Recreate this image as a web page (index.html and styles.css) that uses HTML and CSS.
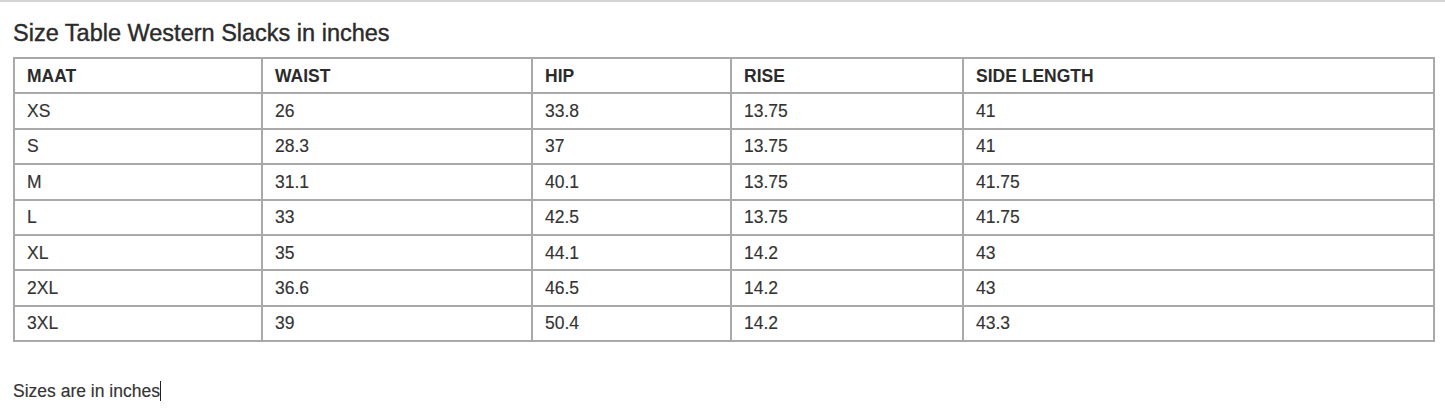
FILE: index.html
```html
<!DOCTYPE html>
<html>
<head>
<meta charset="utf-8">
<link rel="stylesheet" href="styles.css">
</head>
<body>
<div class="page">
  <h2 class="title">Size Table Western Slacks in inches</h2>
  <table class="sizes">
    <colgroup>
      <col class="c1"><col class="c2"><col class="c3"><col class="c4"><col class="c5">
    </colgroup>
    <thead>
      <tr><th>MAAT</th><th>WAIST</th><th>HIP</th><th>RISE</th><th>SIDE LENGTH</th></tr>
    </thead>
    <tbody>
      <tr><td>XS</td><td>26</td><td>33.8</td><td>13.75</td><td>41</td></tr>
      <tr><td>S</td><td>28.3</td><td>37</td><td>13.75</td><td>41</td></tr>
      <tr><td>M</td><td>31.1</td><td>40.1</td><td>13.75</td><td>41.75</td></tr>
      <tr><td>L</td><td>33</td><td>42.5</td><td>13.75</td><td>41.75</td></tr>
      <tr><td>XL</td><td>35</td><td>44.1</td><td>14.2</td><td>43</td></tr>
      <tr><td>2XL</td><td>36.6</td><td>46.5</td><td>14.2</td><td>43</td></tr>
      <tr><td>3XL</td><td>39</td><td>50.4</td><td>14.2</td><td>43.3</td></tr>
    </tbody>
  </table>
  <p class="note">Sizes are in inches<span class="caret"></span></p>
</div>
</body>
</html>
```

FILE: styles.css
```css
html, body {
  margin: 0;
  padding: 0;
  background: #fff;
}
body {
  font-family: "Liberation Sans", Arial, sans-serif;
  color: #333;
  border-top: 2px solid #d4d4d4;
}
.page {
  padding: 0 10px 0 13px;
}
.title {
  margin: 17px 0 0 0;
  font-size: 23.5px;
  line-height: 28px;
  font-weight: normal;
  color: #2b2b2b;
  -webkit-text-stroke: 0.4px #2b2b2b;
}
.sizes {
  margin-top: 10px;
  width: 1420px;
  border-collapse: collapse;
  table-layout: fixed;
  font-size: 17.5px;
}
.c1 { width: 248px; }
.c2 { width: 270px; }
.c3 { width: 199px; }
.c4 { width: 232px; }
.c5 { width: 471px; }
.sizes th, .sizes td {
  border: 2px solid #a9a9a9;
  height: 35.4px;
  padding: 0 12px;
  text-align: left;
  vertical-align: middle;
  box-sizing: border-box;
  line-height: 20px;
}
.sizes th {
  font-weight: bold;
  color: #2b2b2b;
}
.sizes td {
  -webkit-text-stroke: 0.15px #333;
}
.note {
  margin: 38px 0 0 0;
  font-size: 17.5px;
  line-height: 22px;
  color: #333;
  -webkit-text-stroke: 0.15px #333;
}
.caret {
  display: inline-block;
  width: 0;
  height: 20px;
  border-left: 1px solid #222;
  vertical-align: -4px;
}
```
